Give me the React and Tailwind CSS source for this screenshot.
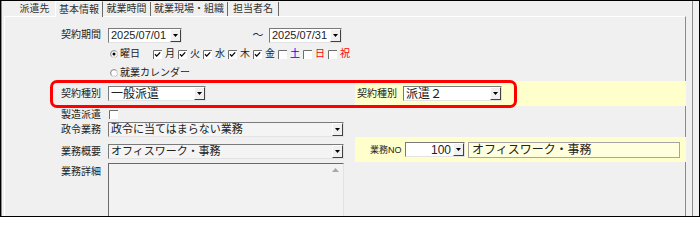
import React from "react";

const font = "font-['Liberation_Sans','Noto_Sans_CJK_JP',sans-serif]";

const DropButton = () => (
  <div className="flex h-full w-[11px] shrink-0 items-center justify-center border border-t-white border-l-white border-b-[#404040] border-r-[#404040] bg-[#f0f0f0]">
    <svg width="5" height="3" viewBox="0 0 5 3">
      <path d="M0 0h5L2.5 3z" fill="#000" />
    </svg>
  </div>
);

const Combo = ({ w, text, size = "text-[11px]", bg = "bg-white", right = false }) => (
  <div className={`flex h-[15px] shrink-0 ${w} ${bg} border border-t-[#7a7a7a] border-l-[#7a7a7a] border-b-[#e3e3e3] border-r-[#e3e3e3]`}>
    <div className={`flex flex-1 items-center overflow-hidden whitespace-nowrap px-[2px] leading-none text-[#222] ${size} ${right ? "justify-end" : "justify-start"}`}>
      {text}
    </div>
    <DropButton />
  </div>
);

const Check = ({ checked }) => (
  <svg width="9" height="9" viewBox="0 0 9 9" className="shrink-0">
    <rect x="0" y="0" width="9" height="9" fill="#fff" />
    <path d="M0.5 9V0.5H9" fill="none" stroke="#6d6d6d" />
    {checked && <path d="M2 4.3l1.7 1.8L7.2 2.4" fill="none" stroke="#000" strokeWidth="1.3" />}
  </svg>
);

const Radio = ({ on }) => (
  <svg width="8" height="8" viewBox="0 0 8 8" className="shrink-0">
    <circle cx="4" cy="4" r="3.4" fill="#fff" stroke="#808080" />
    <path d="M6.4 1.6A3.4 3.4 0 0 1 1.6 6.4" fill="none" stroke="#fff" />
    {on && <circle cx="4" cy="4" r="1.5" fill="#000" />}
  </svg>
);

const Label = ({ children, top = false }) => (
  <div className={`w-[96px] shrink-0 text-right text-[10px] leading-none text-[#222] ${top ? "pt-[5px]" : ""}`}>
    {children}
  </div>
);

const days = [
  { d: "月", on: true, c: "text-[#222]" },
  { d: "火", on: true, c: "text-[#222]" },
  { d: "水", on: true, c: "text-[#222]" },
  { d: "木", on: true, c: "text-[#222]" },
  { d: "金", on: true, c: "text-[#222]" },
  { d: "土", on: false, c: "text-[#0000ff]" },
  { d: "日", on: false, c: "text-[#ff0000]" },
  { d: "祝", on: false, c: "text-[#ff0000]" },
];

const tabs = [
  { t: "派遣先", w: "w-[41px]", sel: false, sep: false },
  { t: "基本情報", w: "w-[48px]", sel: true, sep: false },
  { t: "就業時間", w: "w-[48px]", sel: false, sep: true },
  { t: "就業現場・組織", w: "w-[77px]", sel: false, sep: true },
  { t: "担当者名", w: "w-[51px]", sel: false, sep: true },
];

export default function App() {
  return (
    <div className={`relative h-[217px] w-[700px] overflow-hidden border border-black bg-[#f0f0f0] ${font}`}>
      <div className="flex h-full w-[692px] flex-col border-l border-r border-[#8c8c8c]">
        {/* tab strip */}
        <div className="flex h-[16px] items-end pl-[12px] text-[10px] leading-none text-[#333]">
          {tabs.map((tab) =>
            tab.sel ? (
              <div
                key={tab.t}
                className={`relative z-10 -mb-px flex h-[16px] items-center justify-center border-l border-r border-t border-l-white border-t-white border-r-[#696969] bg-[#f0f0f0] ${tab.w}`}
              >
                {tab.t}
              </div>
            ) : (
              <div
                key={tab.t}
                className={`flex h-[14px] items-center justify-center ${tab.sep ? "border-r border-r-[#696969]" : ""} ${tab.w}`}
              >
                {tab.t}
              </div>
            )
          )}
        </div>

        {/* panel */}
        <div className="ml-[2px] flex w-[682px] flex-1 flex-col border-l border-r border-t border-l-white border-t-white border-r-[#8a8a8a]">
          {/* 契約期間 */}
          <div className="mt-[10px] flex h-[16px] items-center">
            <Label>契約期間</Label>
            <div className="ml-[7px]">
              <Combo w="w-[74px]" text="2025/07/01" size="text-[11px]" />
            </div>
            <div className="ml-[68px] w-[16px] text-center text-[11px] leading-none text-[#222]">～</div>
            <div className="ml-[3px]">
              <Combo w="w-[73px]" text="2025/07/31" size="text-[11px]" />
            </div>
          </div>

          {/* 曜日 */}
          <div className="mt-[3px] flex h-[16px] items-center">
            <div className="w-[96px] shrink-0" />
            <div className="ml-[9px] flex items-center">
              <Radio on />
              <span className="ml-[2px] text-[10px] leading-none text-[#222]">曜日</span>
            </div>
            <div className="ml-[13px] flex items-center">
              {days.map((x) => (
                <div key={x.d} className="flex w-[25px] items-center">
                  <Check checked={x.on} />
                  <span className={`ml-[3px] text-[10px] leading-none ${x.c}`}>{x.d}</span>
                </div>
              ))}
            </div>
          </div>

          {/* 就業カレンダー */}
          <div className="mt-[3px] flex h-[16px] items-center">
            <div className="w-[96px] shrink-0" />
            <div className="ml-[9px] flex items-center">
              <Radio />
              <span className="ml-[2px] text-[10px] leading-none text-[#222]">就業カレンダー</span>
            </div>
          </div>

          {/* 契約種別 */}
          <div className="flex h-[25px]">
            <div className="flex w-[350px] shrink-0 items-center">
              <Label>契約種別</Label>
              <div className="ml-[7px]">
                <Combo w="w-[98px]" text="一般派遣" size="text-[12px]" />
              </div>
            </div>
            <div className="relative z-10 -mr-px flex flex-1 items-center bg-[#ffffcc] pl-[2px]">
              <span className="text-[10px] leading-none text-[#222]">契約種別</span>
              <div className="ml-[6px]">
                <Combo w="w-[99px]" text="派遣２" size="text-[12px]" />
              </div>
            </div>
          </div>

          {/* 製造派遣 */}
          <div className="flex h-[16px] items-center pt-px">
            <Label>製造派遣</Label>
            <div className="ml-[8px] flex">
              <Check />
            </div>
          </div>

          {/* 政令業務 */}
          <div className="flex h-[15px] items-center">
            <Label>政令業務</Label>
            <div className="ml-[7px]">
              <Combo w="w-[236px]" text="政令に当てはまらない業務" bg="bg-[#f4f4f4]" />
            </div>
          </div>

          {/* 業務概要 */}
          <div className="flex h-[25px]">
            <div className="flex w-[350px] shrink-0 items-start pt-[7px]">
              <div className="flex h-[15px] items-center">
                <Label>業務概要</Label>
              </div>
              <div className="ml-[7px]">
                <Combo w="w-[236px]" text="オフィスワーク・事務" bg="bg-[#f4f4f4]" />
              </div>
            </div>
            <div className="relative z-10 -mr-px flex flex-1 items-start bg-[#ffffcc] pt-[5px] pl-[15px]">
              <div className="flex h-[16px] w-[35px] items-center text-[9px] leading-none text-[#222]">業務NO</div>
              <div className="flex h-[16px]">
                <Combo w="w-[60px]" text="100" size="text-[12px]" right />
              </div>
              <div className="ml-[3px] flex h-[16px] w-[212px] items-center border border-[#a5a5a5] bg-[#ffffdd] pl-[3px] text-[12px] leading-none text-[#222]">
                オフィスワーク・事務
              </div>
            </div>
          </div>

          {/* 業務詳細 */}
          <div className="flex flex-1">
            <Label top>業務詳細</Label>
            <div className="ml-[7px] mt-px flex h-[60px] w-[236px] border border-t-[#6a6a6a] border-l-[#6a6a6a] border-b-[#e3e3e3] border-r-[#e3e3e3] bg-[#f2f2f2]">
              <div className="flex-1" />
              <div className="flex w-[15px] flex-col items-center justify-between pt-[4px] pb-[2px]">
                <svg width="7" height="4" viewBox="0 0 7 4">
                  <path d="M0 4L3.5 0L7 4z" fill="#a8a8a8" />
                </svg>
                <svg width="7" height="4" viewBox="0 0 7 4">
                  <path d="M0 0h7L3.5 4z" fill="#a8a8a8" />
                </svg>
              </div>
            </div>
          </div>
        </div>
      </div>

      {/* red highlight */}
      <div className="pointer-events-none absolute left-[49px] top-[79px] z-20 h-[28px] w-[467px] rounded-[7px] border-[3px] border-[#ff0000]" />
    </div>
  );
}
